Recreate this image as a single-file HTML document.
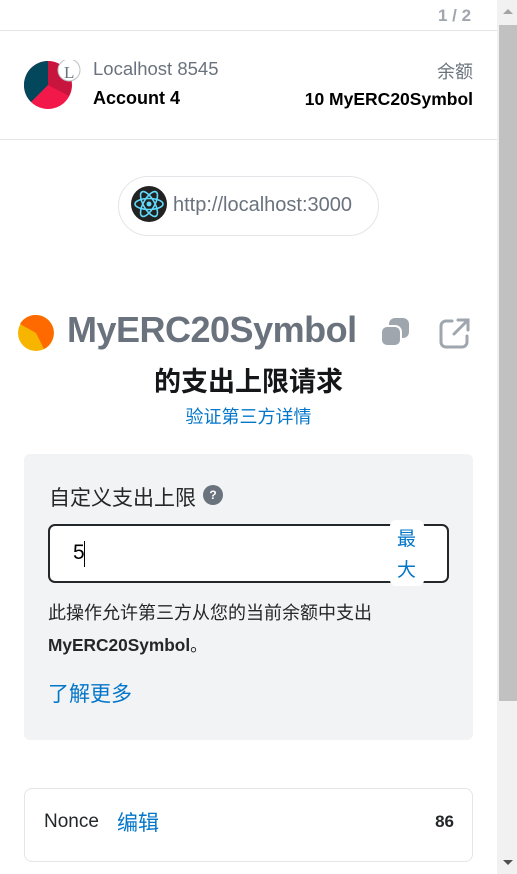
<!DOCTYPE html>
<html><head><meta charset="utf-8"><style>
*{box-sizing:border-box;margin:0;padding:0}
body{width:517px;height:874px;overflow:hidden;background:#fff;font-family:"Liberation Sans","Noto Sans CJK SC",sans-serif;position:relative}
.abs{position:absolute;white-space:nowrap}
.sb{left:497px;top:0;width:20px;height:874px;background:#f1f1f1}
.thumb{left:499px;top:25px;width:18px;height:676px;background:#c1c1c1}
</style></head><body>
<div class="abs" style="left:438px;top:6px;font-size:17px;font-weight:bold;color:#9fa6ae">1 / 2</div>
<div class="abs" style="left:0;top:30px;width:497px;height:1px;background:#e3e5e8"></div>
<svg class="abs" style="left:23px;top:60px" width="58" height="50" viewBox="0 0 58 50">
<circle cx="25" cy="25" r="24" fill="#f2194a"/>
<path d="M25 25 L25 1 A24 24 0 0 0 1 25 A24 24 0 0 0 8 42 Z" fill="#03475d"/>
<path d="M25 25 L25 1 A24 24 0 0 1 46 36 Z" fill="#c8153d"/>
<circle cx="46" cy="10" r="11" fill="#fff" stroke="#bbc0c5"/>
<text x="41" y="18" font-size="17" fill="#6a737d" font-family="Liberation Serif">L</text>
</svg>
<div class="abs" style="left:93px;top:58px;font-size:18.5px;color:#6a737d">Localhost 8545</div>
<div class="abs" style="left:93px;top:88px;font-size:18px;font-weight:bold;color:#000">Account 4</div>
<div class="abs" style="right:44px;top:58px;font-size:18px;color:#6a737d">余额</div>
<div class="abs" style="right:44px;top:89px;font-size:17.5px;font-weight:bold;color:#000">10 MyERC20Symbol</div>
<div class="abs" style="left:0;top:139px;width:497px;height:1px;background:#e3e5e8"></div>
<div class="abs" style="left:118px;top:176px;width:261px;height:60px;border:1px solid #e3e5e8;border-radius:30px"></div>
<svg class="abs" style="left:130px;top:185px" width="38" height="38" viewBox="0 0 38 38">
<circle cx="19" cy="19" r="18" fill="#222"/>
<g fill="none" stroke="#61dafb" stroke-width="1.6"><ellipse cx="19" cy="19" rx="14" ry="5.5"/><ellipse cx="19" cy="19" rx="14" ry="5.5" transform="rotate(60 19 19)"/><ellipse cx="19" cy="19" rx="14" ry="5.5" transform="rotate(120 19 19)"/></g>
<circle cx="19" cy="19" r="2.5" fill="#61dafb"/></svg>
<div class="abs" style="left:173px;top:194px;font-size:20px;color:#6a737d">http://localhost:3000</div>
<svg class="abs" style="left:18px;top:315px" width="36" height="36" viewBox="0 0 36 36"><circle cx="18" cy="18" r="18" fill="#f7b500"/><path d="M18 18 L18 0 A18 18 0 0 1 26 34 Z" fill="#ff6a00"/><path d="M18 18 L2 9 A18 18 0 0 1 18 0 Z" fill="#ff6a00"/></svg>
<div class="abs" style="left:67px;top:309px;font-size:36px;font-weight:bold;color:#6a737d;letter-spacing:-0.5px">MyERC20Symbol</div>
<svg class="abs" style="left:380px;top:317px" width="30" height="30" viewBox="0 0 30 30"><rect x="9" y="1" width="20" height="20" rx="6" fill="#9fa6ae"/><rect x="1" y="9" width="20" height="20" rx="6" fill="#9fa6ae" stroke="#fff" stroke-width="2"/></svg>
<svg class="abs" style="left:439px;top:317px" width="32" height="32" viewBox="0 0 32 32" fill="none" stroke="#9fa6ae" stroke-width="3" stroke-linecap="round"><path d="M13 4H7a5 5 0 0 0-5 5v16a5 5 0 0 0 5 5h16a5 5 0 0 0 5-5v-6"/><path d="M19 3h10v10M29 3L15 17"/></svg>
<div class="abs" style="left:0;width:497px;top:360px;text-align:center;font-size:27px;font-weight:bold;color:#141618">的支出上限请求</div>
<div class="abs" style="left:0;width:497px;top:403px;text-align:center;font-size:18px;color:#0376c9">验证第三方详情</div>
<div class="abs" style="left:24px;top:454px;width:449px;height:286px;background:#f2f3f4;border-radius:6px"></div>
<div class="abs" style="left:49px;top:482px;font-size:21px;color:#24272a">自定义支出上限</div>
<div class="abs" style="left:203px;top:485px;width:20px;height:20px;border-radius:50%;background:#6a737d;color:#fff;font-size:12px;font-weight:bold;text-align:center;line-height:20px">?</div>
<div class="abs" style="left:48px;top:524px;width:401px;height:59px;border:2px solid #24272a;border-radius:7px;background:#fff"></div>
<div class="abs" style="left:73px;top:541px;font-size:21px;color:#000">5</div>
<div class="abs" style="left:84px;top:541px;width:1px;height:26px;background:#000"></div>
<div class="abs" style="left:390px;top:520px;width:34px;height:66px;background:#fff;border-radius:6px"></div>
<div class="abs" style="left:397px;top:524px;font-size:19px;color:#0376c9;line-height:31px;width:22px;white-space:normal">最<br>大</div>
<div class="abs" style="left:48px;top:599px;font-size:18px;color:#24272a">此操作允许第三方从您的当前余额中支出</div>
<div class="abs" style="left:48px;top:631px;font-size:17.3px;font-weight:bold;color:#24272a">MyERC20Symbol<span style="font-weight:normal">。</span></div>
<div class="abs" style="left:48px;top:678px;font-size:21px;color:#0376c9">了解更多</div>
<div class="abs" style="left:24px;top:788px;width:449px;height:74px;border:1px solid #e3e5e8;border-radius:8px"></div>
<div class="abs" style="left:44px;top:811px;font-size:19px;color:#24272a">Nonce</div>
<div class="abs" style="left:117px;top:807px;font-size:21px;color:#0376c9">编辑</div>
<div class="abs" style="right:63px;top:812px;font-size:17px;font-weight:bold;color:#24272a">86</div>
<div class="abs sb"></div>
<div class="abs thumb"></div>
<div class="abs" style="left:503px;top:9px;width:0;height:0;border-left:5px solid transparent;border-right:5px solid transparent;border-bottom:5px solid #a3a3a3"></div>
<div class="abs" style="left:503px;top:860px;width:0;height:0;border-left:5px solid transparent;border-right:5px solid transparent;border-top:5px solid #505050"></div>
</body></html>
